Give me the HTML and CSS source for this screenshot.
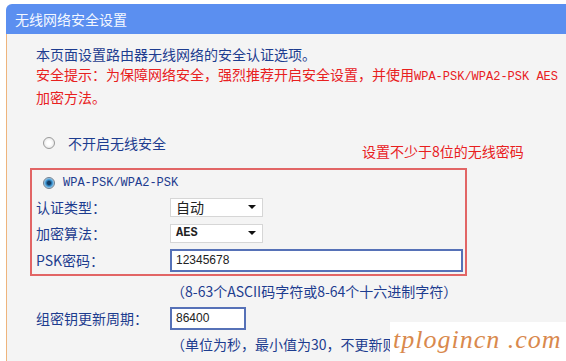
FILE: index.html
```html
<!DOCTYPE html>
<html lang="zh-CN">
<head>
  <meta charset="UTF-8" />
  <title>无线网络安全设置</title>
  <link rel="stylesheet" href="styles.css">
</head>
<body>

<div class="panel">
  <div class="panel-title">无线网络安全设置</div>

  <div class="panel-body">
    <div class="intro">
      <p class="intro-line">本页面设置路由器无线网络的安全认证选项。</p>
      <p class="intro-line warn">安全提示：为保障网络安全，强烈推荐开启安全设置，并使用<span class="mono">WPA-PSK/WPA2-PSK AES</span></p>
      <p class="intro-line warn">加密方法。</p>
    </div>

    <div class="radio-row off-row">
      <span class="radio"></span>
      <span class="radio-label">不开启无线安全</span>
    </div>

    <div class="psk-box">
      <div class="radio-row">
        <span class="radio checked"></span>
        <span class="radio-label mono">WPA-PSK/WPA2-PSK</span>
      </div>

      <div class="form-row">
        <label>认证类型：</label>
        <div class="select"><span>自动</span><i class="arrow"></i></div>
      </div>
      <div class="form-row">
        <label>加密算法：</label>
        <div class="select"><span class="mono bold">AES</span><i class="arrow"></i></div>
      </div>
      <div class="form-row psk-row">
        <label>PSK密码：</label>
        <div class="input wide">12345678</div>
      </div>
    </div>

    <p class="hint first-hint">（8-63个ASCII码字符或8-64个十六进制字符）</p>

    <div class="form-row group-row">
      <label>组密钥更新周期：</label>
      <div class="input short">86400</div>
    </div>

    <p class="hint">（单位为秒，最小值为30，不更新则为0）</p>
  </div>
</div>

<!-- annotation + watermark sit over the page -->
<div class="note">设置不少于8位的无线密码</div>
<div class="watermark">tplogincn .com</div>

</body>
</html>
```

FILE: styles.css
```css
body {
  margin: 0;
  background: #fff;
  font-family: "Noto Sans CJK SC", "Liberation Sans", sans-serif;
  font-size: 14px;
  color: #1d3c8f;
  overflow: hidden;
}

p { margin: 0; }

.panel {
  margin: 4px 0 0 6px;
  height: 357px;
  background: #f4f4f4;
  border-top-left-radius: 6px;
}

.panel-title {
  height: 30px;
  line-height: 30px;
  padding-left: 9px;
  background: #5b8ff0;
  color: #f4f8ff;
  font-size: 14px;
  border-top-left-radius: 6px;
}

.panel-body {
  height: 327px;
  padding: 10px 0 0 23px;
  border-left: 1px solid #eeb47c;
  box-sizing: border-box;
}

.intro { padding-left: 6px; }

.intro-line {
  line-height: 20px;
  white-space: nowrap;
}

.warn { color: #e8201e; }

.mono {
  font-family: "Liberation Mono", "DejaVu Sans Mono", monospace;
  font-size: 12px;
}

.bold { font-weight: bold; }

.radio-row {
  display: flex;
  align-items: center;
  height: 22px;
  padding-left: 13px;
}

.off-row { margin-top: 25px; }

.radio {
  width: 10px;
  height: 10px;
  border-radius: 50%;
  border: 1px solid #9a9a9a;
  background: radial-gradient(circle, #fff 30%, #dcdcdc 100%);
}

.radio.checked {
  border-color: #6f7f8f;
  background: radial-gradient(circle, #123d66 22%, #3f9ad8 48%, #bcd7ea 75%, #e8e8e8 100%);
}

.radio-label { margin-left: 13px; }

.psk-box {
  margin-top: 14px;
  width: 437px;
  height: 108px;
  padding: 2px 0 0 4px;
  border: 2px solid #e26565;
  box-sizing: border-box;
}

.psk-box .radio-row { padding-left: 7px; }
.psk-box .radio-label { margin-left: 8px; }

.form-row {
  display: grid;
  grid-template-columns: 134px auto;
  align-items: center;
  height: 26px;
}

.form-row label { white-space: nowrap; }

.psk-row { height: 28px; }

.select {
  display: flex;
  align-items: center;
  justify-content: space-between;
  width: 93px;
  height: 19px;
  padding: 0 6px 0 5px;
  box-sizing: border-box;
  background: #fff;
  border: 1px solid #d6d6d6;
  color: #222;
}

.arrow {
  width: 0;
  height: 0;
  border-left: 4px solid transparent;
  border-right: 4px solid transparent;
  border-top: 4px solid #111;
}

.input {
  height: 23px;
  line-height: 19px;
  padding-left: 4px;
  box-sizing: border-box;
  background: #fff;
  border: 2px solid #5671b7;
  color: #222;
  font-family: "Liberation Sans", sans-serif;
  font-size: 12px;
}

.input.wide { width: 293px; }
.input.short { width: 76px; }

.hint {
  padding-left: 141px;
  line-height: 20px;
  white-space: nowrap;
}

.first-hint { margin-top: 5px; }

.group-row {
  padding-left: 6px;
  margin: 4px 0 3px;
}

.note {
  position: absolute;
  left: 362px;
  top: 141px;
  color: #e8201e;
  font-size: 14px;
}

.watermark {
  position: absolute;
  left: 390px;
  top: 322px;
  width: 176px;
  height: 39px;
  padding-left: 3px;
  box-sizing: border-box;
  background: #fff;
  color: #d9894d;
  font-family: "Liberation Serif", serif;
  font-style: italic;
  font-size: 26px;
  letter-spacing: 1px;
  line-height: 36px;
  white-space: nowrap;
  overflow: hidden;
}
```
